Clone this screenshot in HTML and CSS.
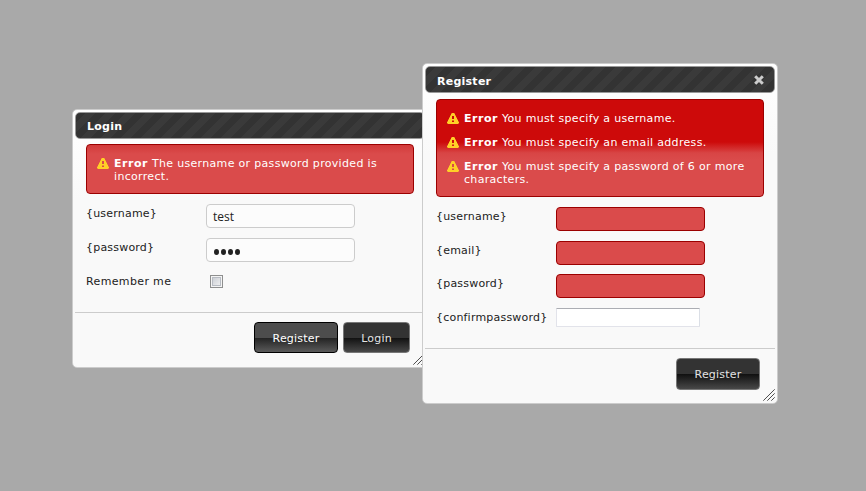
FILE: index.html
```html
<!DOCTYPE html>
<html lang="en">
<head>
<meta charset="utf-8">
<title>Login / Register</title>
<link rel="stylesheet" href="styles.css">
</head>
<body>
<svg width="0" height="0" class="defs">
  <symbol id="alert" viewBox="0 0 12 11"><path fill="#ffd027" fill-rule="evenodd" d="M5 0h2l1 1v1l1 1v1l1 1v1l1 1v1l1 1v1l-1 1H1l-1-1V9l1-1V7l1-1V5l1-1V3l1-1V1zM5 3v3h2V3zM5 7.5v1.5h2V7.5z"/></symbol>
  <symbol id="grip" viewBox="0 0 12 12"><path fill="none" stroke="#222" stroke-width=".8" d="M.3 11.7L11.7.3M4.3 11.7L11.7 4.3M8.3 11.7L11.7 8.3"/></symbol>
</svg>

<section class="dialog login">
  <header class="titlebar"><h1>Login</h1></header>
  <div class="content">
    <div class="errors single">
      <p><svg class="alert"><use href="#alert"/></svg><span><b>Error</b> The username or password provided is incorrect.</span></p>
    </div>
    <form class="fields">
      <div class="row"><label>{username}</label><div class="input">test</div></div>
      <div class="row"><label>{password}</label><div class="input dots"><i></i><i></i><i></i><i></i></div></div>
      <div class="row"><label class="remember">Remember me</label><div class="check"></div></div>
    </form>
  </div>
  <footer class="buttons"><button class="wide hover">Register</button><button>Login</button></footer>
  <svg class="grip"><use href="#grip"/></svg>
</section>

<section class="dialog register">
  <header class="titlebar"><h1>Register</h1>
    <svg class="close" viewBox="0 0 10 10"><path stroke="#ccc" stroke-width="3" d="M1.2 1.2l7.6 7.6M8.8 1.2L1.2 8.8"/></svg>
  </header>
  <div class="content">
    <div class="errors multi">
      <p><svg class="alert"><use href="#alert"/></svg><span><b>Error</b> You must specify a username.</span></p>
      <p><svg class="alert"><use href="#alert"/></svg><span><b>Error</b> You must specify an email address.</span></p>
      <p><svg class="alert"><use href="#alert"/></svg><span><b>Error</b> You must specify a password of 6 or more characters.</span></p>
    </div>
    <form class="fields">
      <div class="row"><label>{username}</label><div class="input invalid"></div></div>
      <div class="row"><label>{email}</label><div class="input invalid"></div></div>
      <div class="row"><label>{password}</label><div class="input invalid"></div></div>
      <div class="row"><label>{confirmpassword}</label><div class="native"></div></div>
    </form>
  </div>
  <footer class="buttons"><button class="wide">Register</button></footer>
  <svg class="grip"><use href="#grip"/></svg>
</section>
</body>
</html>
```
FILE: styles.css
```css
* { box-sizing: border-box; }
body { margin: 0; height: 491px; overflow: hidden; background: #a9a9a9; font: 11px/13px Verdana, "DejaVu Sans", sans-serif; color: #222; position: relative; }
.defs { position: absolute; }
.dialog { position: absolute; width: 356px; padding: 2px; border: 1px solid #ccc; border-radius: 5px; background: linear-gradient(#fff, #f9f9f9 90px); display: flex; flex-direction: column; }
.login { left: 72px; top: 109px; height: 259px; }
.register { left: 422px; top: 63px; height: 341px; }
.titlebar { height: 27px; flex: none; display: flex; align-items: center; justify-content: space-between; padding: 1px 10px 0 11px; border: 1px solid #999; border-radius: 5px; background: repeating-linear-gradient(135deg, #333 0 7.07px, #3a3a3a 7.07px 14.14px); }
.register .titlebar { padding-top: 3px; }
h1 { margin: 0; font-size: 11px; line-height: 13px; letter-spacing: .25px; color: #fff; }
.close { width: 10px; height: 10px; margin-top: -3px; }
.content { flex: 1; padding: 0 11px; }
.errors { width: 328px; border: 1px solid #9b0000; border-radius: 4px; color: #fff; padding: 12px 10px 0; letter-spacing: .32px; }
.errors b { letter-spacing: .55px; }
.errors p { margin: 0 0 11px; display: flex; gap: 5px; }
.alert { width: 12px; height: 11px; flex: none; margin-top: 1px; }
.single { height: 50px; margin-top: 5px; background: linear-gradient(#d23a3a, #da4b4b 9px); }
.multi { height: 98px; margin-top: 6px; background: linear-gradient(#cd0a0a 42px, #d84545 53px, #da4b4b 60px); }
.fields { margin: 10px 0 0; }
.row { display: flex; height: 34px; }
.register .row { height: 33.6px; }
label { width: 120px; padding-top: 3px; white-space: nowrap; letter-spacing: .2px; }
.remember { letter-spacing: .36px; }
.input { width: 149px; height: 24px; border: 1px solid #ccc; border-radius: 4px; background: #fcfcfc; padding: 5px 6px; font: 12px/14px "Open Sans", sans-serif; }
.invalid { border-color: #9b0000; background: #da4b4b; }
.dots { display: flex; align-items: center; gap: 2px; padding: 3px 7px 0; }
.dots i { width: 5px; height: 6px; border-radius: 50%; background: #222; }
.check { width: 13px; height: 13px; margin: 3px 0 0 4px; border: 1px solid #8e8f8f; background: linear-gradient(135deg, #c4c8cf, #f6f6f6); box-shadow: inset 0 0 0 1px #f4f4f4, inset 0 0 0 2px #b8bcc3; }
.native { width: 144px; height: 19px; border: 1px solid #e2e3ea; border-top-color: #abadb3; border-right-color: #dbdfe6; border-radius: 1px; background: #fff; }
.buttons { height: 53px; flex: none; border-top: 1px solid #ccc; padding: 9px 15px 0; display: flex; justify-content: flex-end; gap: 5px; }
button { width: 67px; height: 31px; padding: 1px 0 0; border: 1px solid #777; border-radius: 4px; font: inherit; letter-spacing: .2px; color: #e3e3e3; background: linear-gradient(#333 0 50%, #111 51%, #484848); }
.register button { height: 32px; }
.wide { width: 84px; }
.hover { border-color: #000; background: linear-gradient(#4d4d4d 0 50%, #222 51%, #5a5a5a); color: #fff; }
.grip { position: absolute; right: 2px; bottom: 2px; width: 12px; height: 12px; }
```
